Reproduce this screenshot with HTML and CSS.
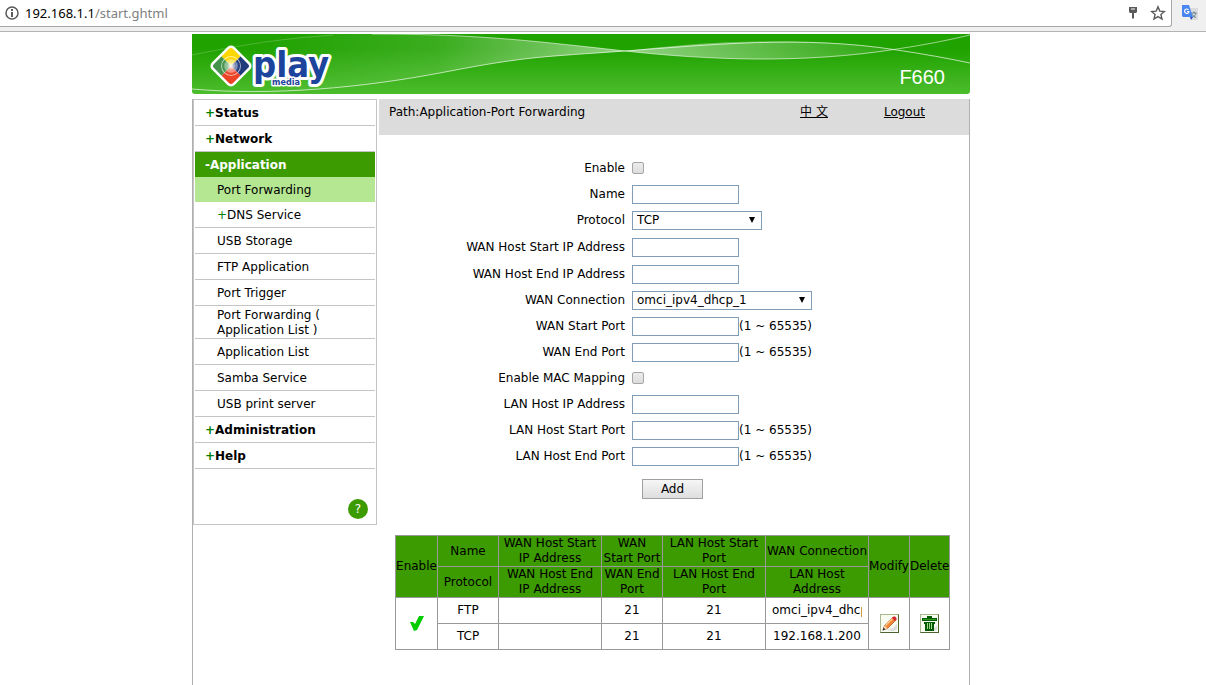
FILE: index.html
```
<!DOCTYPE html>
<html lang="en">
<head>
  <meta charset="UTF-8" />
  <meta name="viewport" content="width=device-width, initial-scale=1.0" />
  <title>F660</title>
  <link rel="stylesheet" href="styles.css">
</head>
<body>
  <div class="toolbar">
    <div class="address">
      <svg width="14" height="14" viewBox="0 0 14 14">
        <circle cx="7" cy="7" r="6" fill="none" stroke="#5a5a5a" stroke-width="1.5" />
        <path d="M6 3h2v2H6zM6 6h2v5H6z" fill="#5a5a5a" />
      </svg>
      <div class="url">192.168.1.1<span>/start.ghtml</span></div>
      <svg width="10" height="14" viewBox="0 0 10 14">
        <path d="M1 1h8v5l-1 1H6v5l-1 1-1-1V7H2L1 6z" fill="#5a5a5a" />
        <path d="M3 3h4" stroke="#fff" />
      </svg>
      <svg class="star" width="16" height="16" viewBox="0 0 16 16">
        <path d="M8 1.8l1.8 4.3 4.6.4-3.5 3 1.1 4.5L8 11.6 4 14l1.1-4.5-3.5-3 4.6-.4z" fill="none" stroke="#5a5a5a" stroke-width="1.4" />
      </svg>
    </div>
    <svg class="translate" width="16" height="16" viewBox="0 0 16 16">
      <path d="M6 3h10v12H9z" fill="#dcdcdc" />
      <path d="M9.500 8h5M12 6.500V8M14 8c-.5 2-2 3.500-3.500 4.500M10.500 9.500c1 1.500 2 2.500 3.500 3" fill="none" stroke="#607d8b" />
      <path d="M0 0h7l4 12H1l-1-1z" fill="#4a86f0" />
      <path d="M8 12h3l-2 3z" fill="#2a4bc0" />
      <path d="M6.500 4.800A2.200 2.200 0 1 0 7 6.500H5" fill="none" stroke="#fff" stroke-width="1.200" />
    </svg>
  </div>

  <div class="page">
    <header class="banner">
      <svg class="waves" viewBox="0 0 778 60" preserveAspectRatio="none">
        <defs>
          <linearGradient id="fade" gradientUnits="userSpaceOnUse" x1="60" y1="0" x2="433" y2="0">
            <stop offset="0" stop-color="#fff" stop-opacity="0" />
            <stop offset="0.5" stop-color="#fff" stop-opacity="0.12" />
            <stop offset="1" stop-color="#fff" stop-opacity="0.5" />
          </linearGradient>
          <linearGradient id="lens" x1="0" x2="1">
            <stop offset="0" stop-color="#fff" stop-opacity="0.5" />
            <stop offset="1" stop-color="#fff" stop-opacity="0.05" />
          </linearGradient>
        </defs>
        <path d="M0 21Q75 5 141 0H180C290 0 350 8 433 17C350 23 336 22 253 38S80 62 0 55z" fill="url(#fade)" />
        <path d="M433 17C513 8 610 1 705 16C610 30 516 26 433 17z" fill="url(#lens)" />
        <g fill="none" stroke="#fff">
          <path d="M0 21Q75 5 141 1" stroke-opacity="0.2" />
          <path d="M180 0C290 0 350 8 433 17S610 30 705 15Q745 9 778 1" stroke-opacity="0.55" />
          <path d="M0 55C80 62 170 54 253 38S350 23 433 17S610 1 705 16Q745 22 778 29" stroke-opacity="0.65" />
        </g>
      </svg>
      <svg class="logo" width="124" height="48" viewBox="0 0 124 48">
        <defs>
          <radialGradient id="glow">
            <stop offset="0" stop-color="#fff" />
            <stop offset="0.3" stop-color="#fff" stop-opacity="0.7" />
            <stop offset="1" stop-color="#fff" stop-opacity="0" />
          </radialGradient>
          <clipPath id="tile"><rect x="-13.5" y="-13.5" width="27" height="27" rx="3" /></clipPath>
        </defs>
        <g transform="translate(21 23) rotate(45)">
          <rect x="-16" y="-16" width="32" height="32" rx="5" fill="#fff" />
          <g clip-path="url(#tile)">
            <rect x="-14" y="-14" width="14" height="14" fill="#ffd700" />
            <rect x="0" y="-14" width="14" height="14" fill="#213a7c" />
            <rect x="0" y="0" width="14" height="14" fill="#ea4326" />
            <rect x="-14" y="0" width="14" height="14" fill="#43934a" />
          </g>
          <circle r="9.500" fill="none" stroke="#fff" stroke-opacity="0.6" />
          <circle r="6" fill="none" stroke="#fff" stroke-opacity="0.3" />
          <circle r="8" fill="url(#glow)" />
        </g>
        <text class="play" x="43" y="34">play</text>
        <text class="media" x="62" y="42">media</text>
      </svg>
      <div class="model">F660</div>
    </header>

    <div class="main">
      <nav class="sidebar">
        <a class="top" href="#"><span>+</span>Status</a>
        <a class="top" href="#"><span>+</span>Network</a>
        <a class="top open" href="#">-Application</a>
        <a class="current" href="#">Port Forwarding</a>
        <a href="#"><span>+</span>DNS Service</a>
        <a href="#">USB Storage</a>
        <a href="#">FTP Application</a>
        <a href="#">Port Trigger</a>
        <a class="double" href="#">Port Forwarding (<br>Application List )</a>
        <a href="#">Application List</a>
        <a href="#">Samba Service</a>
        <a href="#">USB print server</a>
        <a class="top" href="#"><span>+</span>Administration</a>
        <a class="top" href="#"><span>+</span>Help</a>
        <button class="help">?</button>
      </nav>

      <div class="content">
        <div class="path">
          <div class="crumb">Path:Application-Port Forwarding</div>
          <a href="#" lang="zh">中 文</a>
          <a href="#">Logout</a>
        </div>

        <form>
          <div class="row"><label for="enable">Enable</label><input type="checkbox" id="enable"></div>
          <div class="row"><label for="name">Name</label><input type="text" id="name"></div>
          <div class="row">
            <label for="protocol">Protocol</label>
            <div class="select"><select id="protocol"><option>TCP</option><option>UDP</option></select></div>
          </div>
          <div class="row tall"><label for="wanStartIp">WAN Host Start IP Address</label><input type="text" id="wanStartIp"></div>
          <div class="row"><label for="wanEndIp">WAN Host End IP Address</label><input type="text" id="wanEndIp"></div>
          <div class="row">
            <label for="wanConn">WAN Connection</label>
            <div class="select wide"><select id="wanConn"><option>omci_ipv4_dhcp_1</option></select></div>
          </div>
          <div class="row"><label for="wanStart">WAN Start Port</label><input type="text" id="wanStart">(1 ~ 65535)</div>
          <div class="row"><label for="wanEnd">WAN End Port</label><input type="text" id="wanEnd">(1 ~ 65535)</div>
          <div class="row"><label for="mac">Enable MAC Mapping</label><input type="checkbox" id="mac"></div>
          <div class="row"><label for="lanIp">LAN Host IP Address</label><input type="text" id="lanIp"></div>
          <div class="row"><label for="lanStart">LAN Host Start Port</label><input type="text" id="lanStart">(1 ~ 65535)</div>
          <div class="row"><label for="lanEnd">LAN Host End Port</label><input type="text" id="lanEnd">(1 ~ 65535)</div>
          <button type="button" class="add">Add</button>
        </form>

        <table>
          <colgroup>
            <col class="c-enable"><col class="c-small"><col class="c-large"><col class="c-small">
            <col class="c-large"><col class="c-large"><col class="c-modify"><col class="c-delete">
          </colgroup>
          <thead>
            <tr>
              <th rowspan="2">Enable</th>
              <th>Name</th>
              <th>WAN Host Start<br>IP Address</th>
              <th>WAN<br>Start Port</th>
              <th>LAN Host Start<br>Port</th>
              <th>WAN Connection</th>
              <th rowspan="2">Modify</th>
              <th rowspan="2">Delete</th>
            </tr>
            <tr>
              <th>Protocol</th>
              <th>WAN Host End<br>IP Address</th>
              <th>WAN End<br>Port</th>
              <th>LAN Host End<br>Port</th>
              <th>LAN Host<br>Address</th>
            </tr>
          </thead>
          <tbody>
            <tr>
              <td rowspan="2">
                <svg width="14" height="15" viewBox="0 0 14 15">
                  <path d="M0 6h3l2 2 4-8h5L7 14l-3 1z" fill="#00cc00" />
                </svg>
              </td>
              <td>FTP</td>
              <td></td>
              <td>21</td>
              <td>21</td>
              <td><div class="clip">omci_ipv4_dhcp_1</div></td>
              <td rowspan="2">
                <button class="icon" aria-label="Modify">
                  <svg width="17" height="17" viewBox="0 0 17 17">
                    <path d="M5 15l7-2 4-4v5l-3 2z" fill="#ddd" />
                    <path d="M2 15l1.500-4.500L12 2l3 3-8.500 8.500z" fill="#f58634" stroke="#a34a1c" stroke-width="0.7" />
                    <path d="M4.500 10.500L12 3" stroke="#ffd29a" stroke-width="1.300" />
                    <path d="M11 3l1.500-1.500h1.500L15.500 3v1.500L14 6z" fill="#d9232e" />
                    <path d="M2 15l1.500-4.500L6.500 13.500z" fill="#f3d9ae" />
                    <path d="M1.500 15.500l1-3 2 2z" fill="#333" />
                  </svg>
                </button>
              </td>
              <td rowspan="2">
                <button class="icon" aria-label="Delete">
                  <svg width="17" height="17" viewBox="0 0 17 17">
                    <path d="M13 13l3-2v4l-3 1z" fill="#ddd" />
                    <path d="M6 1h5v2h5v3H1V3h5z" fill="#005c00" />
                    <path d="M3 7h11v2h-1v7H4V9H3z" fill="#005c00" />
                    <path d="M6.500 8v6M8.500 8v6M10.500 8v6" stroke="#9fd68a" />
                    <path d="M2 4.500h13" stroke="#2f9a1d" />
                  </svg>
                </button>
              </td>
            </tr>
            <tr>
              <td>TCP</td>
              <td></td>
              <td>21</td>
              <td>21</td>
              <td>192.168.1.200</td>
            </tr>
          </tbody>
        </table>
      </div>
    </div>
  </div>
</body>
</html>
```
FILE: styles.css
```
* {
  box-sizing: border-box;
}
body {
  margin: 0;
  min-height: 100vh;
  display: flex;
  flex-direction: column;
  background: #fff;
  color: #000;
  font-family: Verdana, "DejaVu Sans", "Noto Sans CJK SC", sans-serif;
  font-size: 12px;
  line-height: 15px;
}
svg {
  display: block;
  flex: none;
}
a {
  color: #000;
}

/* browser bar */
.toolbar {
  display: flex;
  height: 32px;
  background: #f0f0f0;
  border-bottom: 1px solid #b4b4b4;
}
.address {
  flex: 1;
  display: flex;
  align-items: center;
  height: 27px;
  padding: 0 5px;
  background: #fff;
  border: solid #a8a8a8;
  border-width: 0 1px 1px 0;
  border-radius: 0 0 3px 0;
}
.url {
  flex: 1;
  margin-left: 6px;
  font-family: "Noto Sans", sans-serif;
  font-size: 13px;
}
.url span {
  color: #808080;
}
.star {
  margin-left: 12px;
}
.translate {
  margin: 5px 8px 0 10px;
}

/* page */
.page {
  flex: 1;
  display: flex;
  flex-direction: column;
  width: 100%;
  max-width: 822px;
  margin: 0 auto;
  padding: 2px 44px 0 0;
}
.banner {
  position: relative;
  display: flex;
  justify-content: space-between;
  height: 60px;
  margin-bottom: 5px;
  padding: 9px 25px 0 18px;
  background: linear-gradient(#20a200 25%, #4cbd2d);
  border-radius: 0 0 3px 3px;
}
.waves {
  position: absolute;
  top: 0;
  left: 0;
  width: 100%;
  height: 100%;
}
.logo,
.model {
  position: relative;
}
.play,
.media {
  font-family: "DejaVu Sans Condensed", "DejaVu Sans", sans-serif;
  font-weight: bold;
  fill: #1c449c;
  stroke: #fff;
  stroke-width: 6px;
  stroke-linejoin: round;
  paint-order: stroke;
}
.play {
  font-size: 36px;
}
.media {
  font-size: 9px;
  stroke-width: 3px;
}
.model {
  padding-top: 22px;
  color: #fff;
  font: 20px/24px "Liberation Sans", sans-serif;
}
.main {
  flex: 1;
  display: flex;
  align-items: flex-start;
  gap: 2px;
  border: solid #b0b0b0;
  border-width: 0 1px;
}

/* menu */
.sidebar {
  flex: none;
  width: 184px;
  padding: 0 1px;
  border: 1px solid #c4c4c4;
}
.sidebar a {
  display: flex;
  align-items: center;
  height: 26px;
  padding: 2px 0 0 22px;
  border-bottom: 1px solid #c4c4c4;
  text-decoration: none;
}
.sidebar .top {
  padding-left: 10px;
  font-weight: bold;
}
.sidebar .open,
.sidebar .current {
  height: 25px;
  border: 0;
}
.sidebar .open {
  background: #3c9b00;
  color: #fff;
}
.sidebar .current {
  background: #b5e692;
}
.sidebar .double {
  height: 33px;
}
.sidebar span {
  color: #008000;
}
.help {
  display: block;
  width: 20px;
  height: 20px;
  margin: 30px 7px 5px auto;
  padding: 0;
  border: 0;
  border-radius: 50%;
  background: #3c9b00;
  color: #fff;
  font: 12px/20px "DejaVu Sans", sans-serif;
}

/* content */
.content {
  flex: 1;
  min-width: 0;
}
.path {
  display: flex;
  gap: 56px;
  height: 36px;
  padding: 6px 44px 0 10px;
  background: #dcdcdc;
}
.crumb {
  flex: 1;
}
form {
  padding-top: 20px;
}
.row {
  display: flex;
  align-items: center;
  height: 26px;
}
.tall {
  height: 28px;
}
.row label {
  width: 246px;
  margin-right: 7px;
  text-align: right;
}
input[type="text"],
select {
  height: 19px;
  margin: 0;
  padding: 0 4px;
  border: 1px solid #7f9db9;
  border-radius: 0;
  background: #fff;
  color: #000;
  font: inherit;
}
input[type="text"] {
  width: 107px;
}
input[type="checkbox"] {
  appearance: none;
  width: 12px;
  height: 12px;
  margin: 0;
  border: 1px solid #a6a6a6;
  border-radius: 2px;
  background: linear-gradient(#ececec, #dcdcdc);
}
.select {
  position: relative;
  width: 130px;
}
.select.wide {
  width: 180px;
}
.select select {
  appearance: none;
  display: block;
  width: 100%;
}
.select::after {
  content: "";
  position: absolute;
  top: 6px;
  right: 7px;
  border: solid transparent;
  border-width: 6px 3px 0;
  border-top-color: #000;
  pointer-events: none;
}
.add {
  display: block;
  width: 61px;
  height: 20px;
  margin: 10px 0 36px 263px;
  padding: 0;
  border: 1px solid #a0a0a0;
  background: linear-gradient(#f6f6f6, #dedede);
  color: #000;
  font: inherit;
}

/* rules */
table {
  width: 554px;
  margin: 0 0 20px 16px;
  border-collapse: collapse;
  table-layout: fixed;
  text-align: center;
}
.c-enable {
  width: 42px;
}
.c-small {
  width: 61px;
}
.c-large {
  width: 103px;
}
.c-modify {
  width: 41px;
}
.c-delete {
  width: 40px;
}
th,
td {
  padding: 0;
  border: 1px solid #999;
  white-space: nowrap;
}
th {
  height: 31px;
  background: #3c9b00;
  font-weight: normal;
}
td {
  height: 26px;
}
td svg {
  margin: 0 auto;
}
.clip {
  width: 90px;
  margin: 0 auto;
  overflow: hidden;
  text-align: left;
}
.icon {
  display: block;
  width: 19px;
  height: 19px;
  margin: 0 auto;
  padding: 0;
  border: 1px solid;
  border-color: #a9b88f #4d6430 #4d6430 #a9b88f;
  background: #f8fbf0;
}
```
